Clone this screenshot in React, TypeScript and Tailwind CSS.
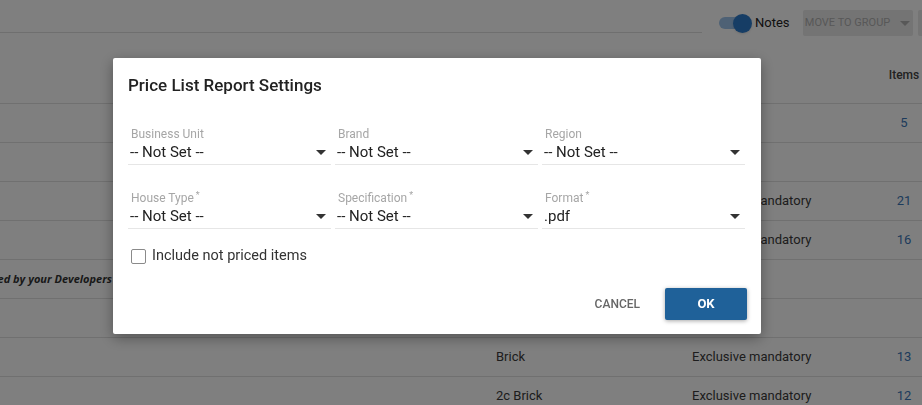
type Row = { type?: string; rule?: string; items?: string; group?: string };

const rows: Row[] = [
  { items: "5" },
  {},
  { type: "Tile", rule: "Exclusive mandatory", items: "21" },
  { type: "Tile", rule: "Exclusive mandatory", items: "16" },
  { group: "Options Suggested by your Developers" },
  {},
  { type: "Brick", rule: "Exclusive mandatory", items: "13" },
  { type: "2c Brick", rule: "Exclusive mandatory", items: "12" },
];

const Caret = ({ color = "#333" }: { color?: string }) => (
  <svg width="10" height="5" viewBox="0 0 10 5" className="shrink-0">
    <path d="M0 0h10L5 5z" fill={color} />
  </svg>
);

const SelectField = ({ label, value, required }: { label: string; value: string; required?: boolean }) => {
  return (
    <div className="flex flex-col">
      <div className="h-[14px] pl-[3px] text-[12px] leading-[14px] text-[#a6a6a6]">
        {label}
        {required && <span className="ml-[2px] align-top text-[9px] leading-none">*</span>}
      </div>
      <div className="mt-[2px] flex h-[22px] items-center justify-between border-b border-[#e6e6e6] pb-[2px] pl-[2px] pr-[5px]">
        <span className="text-[15px] text-[#222]">{value}</span>
        <Caret />
      </div>
    </div>
  );
};

const App = () => {
  return (
    <div className="relative h-[405px] w-[922px] overflow-hidden bg-white font-['Roboto',sans-serif]">
      {/* toolbar */}
      <div className="flex h-[46px] items-start">
        <div className="h-[33px] w-[702px] shrink-0 border-b border-[#dedede]" />
        <div className="ml-[17px] mt-[13px] flex shrink-0 items-center">
          <div className="relative h-[20px] w-[33px]">
            <div className="absolute left-0 top-[4px] h-[12px] w-[26px] rounded-full bg-[#9dc3ea]" />
            <div className="absolute right-0 top-[0.5px] h-[19px] w-[19px] rounded-full bg-[#2d7bcb] shadow" />
          </div>
          <span className="ml-[3px] text-[13px] text-[#222]">Notes</span>
        </div>
        <div className="ml-[13px] mt-[10px] flex h-[26px] w-[110px] shrink-0 items-center justify-center gap-[10px] rounded-[2px] bg-[#e8e8e8] text-[11px] font-normal text-[#b0b0b0]">
          MOVE TO GROUP
          <Caret color="#b0b0b0" />
        </div>
        <div className="ml-[5px] mt-[10px] h-[26px] w-[100px] shrink-0 rounded-[2px] bg-[#e8e8e8]" />
      </div>

      {/* table */}
      <div className="grid h-[58px] grid-cols-[496px_196px_1fr_36px] items-center border-b border-[#e0e0e0] text-[12px] font-medium text-[#444]">
        <div />
        <div />
        <div />
        <div className="text-center">Items</div>
      </div>
      {rows.map((r, i) =>
        r.group ? (
          <div key={i} className="flex h-[39px] items-center border-b border-[#e0e0e0]">
            <div className="flex w-[112px] justify-end">
              <span className="shrink-0 whitespace-nowrap font-['Open_Sans',sans-serif] text-[11px] font-bold italic text-[#333]">
                {r.group}
              </span>
            </div>
          </div>
        ) : (
          <div
            key={i}
            className="grid h-[39px] grid-cols-[496px_196px_1fr_36px] items-center border-b border-[#e0e0e0] text-[13px] text-[#3a3a3a]"
          >
            <div />
            <div>{r.type}</div>
            <div>{r.rule}</div>
            <div className="text-center text-[#3b77b8]">{r.items}</div>
          </div>
        )
      )}

      {/* modal */}
      <div className="fixed inset-0 bg-black/50 pl-[113px] pt-[58px]">
        <div className="w-[648px] rounded-[2px] bg-white pb-[14px] pl-[15px] pr-4 pt-[15px] shadow-[0_4px_14px_rgba(0,0,0,0.35)]">
          <h2 className="text-[17px] font-medium leading-[24px] text-[#222]">Price List Report Settings</h2>
          <div className="mt-[30px] grid grid-cols-3 gap-x-[4px] gap-y-[26px]">
            <SelectField label="Business Unit" value="-- Not Set --" />
            <SelectField label="Brand" value="-- Not Set --" />
            <SelectField label="Region" value="-- Not Set --" />
            <SelectField label="House Type" value="-- Not Set --" required />
            <SelectField label="Specification" value="-- Not Set --" required />
            <SelectField label="Format" value=".pdf" required />
          </div>
          <label className="mt-[18px] flex h-[18px] items-center pl-[3px]">
            <span className="h-[15px] w-[15px] rounded-[2px] border-[1.5px] border-[#8a8a8a]" />
            <span className="ml-[6px] text-[14.5px] leading-[18px] text-[#333]">Include not priced items</span>
          </label>
          <div className="-mr-[2px] mt-[23px] flex items-center justify-end">
            <button className="mr-[25px] text-[12px] font-medium text-[#666]">CANCEL</button>
            <button className="h-[32px] w-[82px] rounded-[2px] bg-[#1f6199] text-[13px] font-bold text-white shadow-[0_1px_4px_rgba(0,0,0,0.35)]">
              OK
            </button>
          </div>
        </div>
      </div>
    </div>
  );
};

export default App;
